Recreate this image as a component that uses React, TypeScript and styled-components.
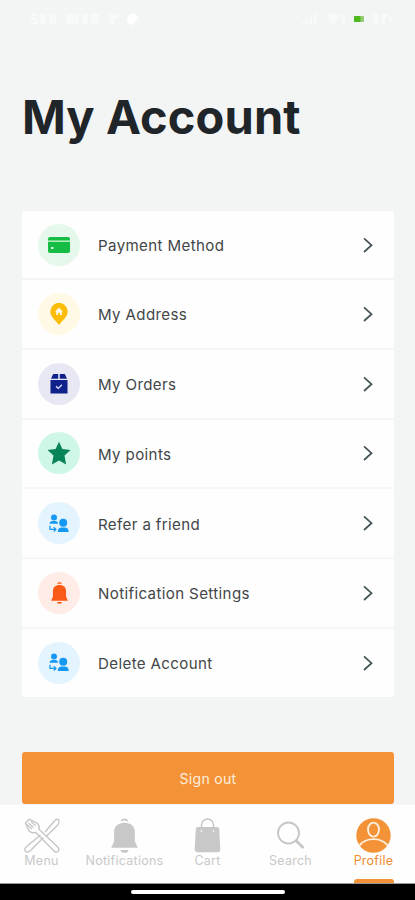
import React from "react";
import styled, { createGlobalStyle } from "styled-components";

const GlobalStyle = createGlobalStyle`
  * { box-sizing: border-box; }
  body { margin: 0; background: #f3f5f5; font-family: Inter, "Liberation Sans", sans-serif; }
`;

const Screen = styled.div`
  width: 415px;
  height: 900px;
  display: flex;
  flex-direction: column;
  background: #f3f5f5;
  overflow: hidden;
`;

const StatusBar = styled.header`
  height: 40px;
  flex: none;
  display: flex;
  align-items: center;
  justify-content: space-between;
  padding: 0 22px 2px 30px;
`;

const StatusGroup = styled.div`
  display: flex;
  align-items: center;
  gap: 6px;
`;

const Content = styled.main`
  flex: 1;
  min-height: 0;
  display: flex;
  flex-direction: column;
  padding: 0 21px 0 22px;
`;

const Title = styled.h1`
  margin: 48px 0 0;
  height: 58px;
  line-height: 58px;
  font-size: 47px;
  font-weight: 700;
  letter-spacing: 0.1px;
  color: #1f2528;
  white-space: nowrap;
`;

const Card = styled.ul`
  list-style: none;
  margin: 65px 0 0;
  padding: 0;
  background: #fefefe;
  border-radius: 2px;
`;

const Row = styled.li`
  height: 69.75px;
  display: flex;
  align-items: center;
  padding: 0 20px 0 16px;
  border-bottom: 2px solid #f5f7f7;

  &:first-child { height: 69px; }
  &:last-child { height: 68.25px; border-bottom: 0; }
`;

const Badge = styled.span<{ $tint: string }>`
  width: 42px;
  height: 42px;
  border-radius: 50%;
  background: ${(p) => p.$tint};
  display: grid;
  place-items: center;
`;

const Label = styled.span`
  flex: 1;
  margin-left: 18px;
  padding-top: 3px;
  font-size: 15.1px;
  line-height: 20px;
  letter-spacing: 0.37px;
  color: #434648;
`;

const SignOut = styled.button`
  margin-top: 55px;
  height: 52px;
  flex: none;
  border: 0;
  border-radius: 3px;
  background: #f39237;
  color: #fff0dc;
  font: 400 14px/20px Inter, "Liberation Sans", sans-serif;
  letter-spacing: 0.3px;
  padding: 2px 0 0;
`;

const TabBar = styled.nav`
  height: 79px;
  flex: none;
  display: grid;
  grid-template-columns: repeat(5, 83px);
  background: #fefefe;
  border-bottom: 1px solid #999;
`;

const Tab = styled.div<{ $active?: boolean }>`
  display: flex;
  flex-direction: column;
  align-items: center;
  padding-top: 13px;
  color: ${(p) => (p.$active ? "#f08c31" : "#c9c9c9")};
`;

const TabLabel = styled.span`
  font-size: 12.5px;
  line-height: 14px;
  margin-top: 1px;
  letter-spacing: 0.25px;
  white-space: nowrap;
`;

const ActiveMark = styled.span`
  width: 40px;
  height: 4px;
  margin-top: auto;
  border-radius: 3px 3px 0 0;
  background: #f39237;
`;

const HomeArea = styled.footer`
  height: 16px;
  flex: none;
  background: #000;
  display: flex;
  justify-content: center;
  padding-top: 6px;
`;

const HomeIndicator = styled.span`
  width: 154px;
  height: 4px;
  border-radius: 2px;
  background: #fff;
`;

const CardIcon = () => (
  <svg width="22" height="16" viewBox="0 0 22 16">
    <rect width="22" height="16" rx="2" fill="#16bd45" />
    <path d="M0 4.2h22" stroke="#baf0c6" strokeWidth="1.5" />
    <rect x="3" y="10" width="2.5" height="2" fill="#d6f6dd" />
  </svg>
);

const PinIcon = () => (
  <svg width="18" height="22" viewBox="0 0 18 22">
    <path d="M9 22C6 18 .3 13.8.3 8.6a8.7 8.7 0 0 1 17.4 0C17.7 13.8 12 18 9 22Z" fill="#fbbd08" />
    <path d="m9 4.8 4 3.8h-1.2v3.3H10V9.7H8v2.2H6.2V8.6H5Z" fill="#fffbea" />
  </svg>
);

const BoxIcon = () => (
  <svg width="18" height="20" viewBox="0 0 18 20" fill="#10218c">
    <path d="M3.2 0h5v4.8H1Zm6.6 0h5L17 4.8H9.8ZM.5 6h17v13.6H.5Z" />
    <path d="m6 12.4 2.3 2 3.6-3.6" fill="none" stroke="#d7dcf5" strokeWidth="1.4" />
  </svg>
);

const StarIcon = () => (
  <svg width="24" height="24" viewBox="0 0 24 24">
    <path d="m12 .8 3.4 7.3 8.1.9-6 5.5 1.6 8.9-7.1-4-7.1 4 1.6-8.9-6-5.5 8.1-.9Z" fill="#078458" />
  </svg>
);

const PeopleIcon = () => (
  <svg width="20" height="19" viewBox="0 0 20 19" fill="#1498f4">
    <circle cx="5" cy="3.4" r="3" />
    <path d="M.5 9.7c.2-2 1.6-2.8 3-2.8h3c1.3 0 2.3.8 2.6 2.8Z" />
    <circle cx="14.2" cy="8.8" r="4" />
    <path d="M8.7 18c.2-3.3 1.8-4.4 3.7-4.4h3.6c2 0 3.4 1.2 3.7 4.4Z" />
    <path d="M1 11.7v3.7h5.5M4.7 13.2l2.2 2.2-2.2 2" fill="none" stroke="#1498f4" strokeWidth="1.3" />
  </svg>
);

const BellShape = ({ width, height, color }: { width: number; height: number; color: string }) => (
  <svg width={width} height={height} viewBox="0 0 26 34" fill={color} preserveAspectRatio="none">
    <path d="M9.5 3.3C9.8 1.2 11 .4 13 .4s3.2.8 3.5 2.9l-1.8-.4c-.8-.8-2.6-.8-3.4 0ZM3 22.5v-9C3 8 7 4.5 13 4.5S23 8 23 13.5v9l2.8 6.5H.2ZM9 31h8c-.5 1.8-2 2.8-4 2.8S9.5 32.8 9 31Z" />
  </svg>
);

const Chevron = () => (
  <svg width="12" height="18" viewBox="0 0 12 18" fill="none">
    <path d="m2 2.3 7.5 6.9L2 16" stroke="#465559" strokeWidth="1.8" />
  </svg>
);

const CutleryIcon = () => (
  <svg width="36" height="35" viewBox="0 0 36 35" fill="none" stroke="#c6c6c6" strokeWidth="1.4" strokeLinejoin="round">
    <path d="M21 14 30.5 3c1.2-1.4 3-2 4-1.4.8 1.6.2 4.5-1.2 5.9L22 18.4M16.5 17 2 29c-1.6 1.6-1.4 3.4-.3 4.4s3.2.8 4.3-.5l13.5-13.4" />
    <path d="M5.3 1.2 1.4 5l3.8 8c1.8 1.8 4.2 2 6.6 1.4L30 33c1.2 1.3 3 1.5 4.2.3s.9-3-.5-4.2L15 11.3c.5-2.2 0-4.2-1.6-5.9Z" />
    <path d="m4.5 5 5 4.5M6.8 3.5l5 4.2M2.8 6.5 8 11" strokeWidth="1.2" />
  </svg>
);

const BagIcon = () => (
  <svg width="27" height="35" viewBox="0 0 27 35">
    <path d="M7.5 12V7a6 6 0 0 1 12 0v5" fill="none" stroke="#c6c6c6" strokeWidth="1.5" />
    <path d="M4.2 9h18.6c1.5 0 2.3.8 2.4 2.2L26.3 31c.1 2-1 3.3-3 3.3H3.7c-2 0-3.1-1.3-3-3.3l1.1-19.8C1.9 9.8 2.7 9 4.2 9Z" fill="#c8c8c8" />
    <circle cx="7.5" cy="13" r="1" fill="#f4f4f4" />
    <circle cx="19.5" cy="13" r="1" fill="#f4f4f4" />
  </svg>
);

const SearchIcon = () => (
  <svg width="30" height="35" viewBox="0 0 30 35" fill="none" stroke="#c6c6c6">
    <circle cx="12.5" cy="15" r="10.5" strokeWidth="1.9" />
    <path d="m20 22.5 7.5 7.5" strokeWidth="2.7" />
  </svg>
);

const ProfileIcon = () => (
  <svg width="35" height="35" viewBox="0 0 35 35">
    <circle cx="17.5" cy="17.5" r="17.2" fill="#f39237" />
    <g fill="none" stroke="#fff0dd" strokeWidth="1.9">
      <ellipse cx="17.5" cy="11.6" rx="5.5" ry="7" />
      <path d="M3.5 27.3c3.2-4 8-6.2 14-6.2s10.8 2.2 14 6.2" />
    </g>
  </svg>
);

const SignalMarks = () => (
  <svg width="120" height="16" viewBox="0 0 120 16" fill="#f8f9f9">
    <path d="M1 3h6v2H3v2h4v6H1v-2h4V9H1Zm9 0h6v10h-6Zm9 0h7v10h-7ZM36 3h13v10H36Zm16 0h6v10h-6Zm9 0h9l-3 10h-6Zm18 0h10v4h-5v6h-5Z" />
    <path d="M99 13a6 6 0 1 1 9.5-7l-6 8Z" fill="#fff" />
  </svg>
);

const NetworkMarks = () => (
  <svg width="45" height="14" viewBox="0 0 45 14" fill="#f8f9f9">
    <path d="M0 10h2v3H0Zm4-3h2v6H4Zm4-3h2v9H8Zm4-3h2v12h-2ZM24 4q7-5 14 0l-7 9Zm16-1h3v10h-3Z" />
  </svg>
);

const Battery = () => (
  <svg width="12" height="8" viewBox="0 0 12 8">
    <rect x="1" y="1" width="10" height="6" rx="1" fill="#91cd70" />
    <rect x="1" y="1" width="6.5" height="6" rx="1" fill="#4db91d" />
  </svg>
);

const BatteryLevel = () => (
  <svg width="22" height="12" viewBox="0 0 22 12" fill="#f8f9f9">
    <path d="M2 1h5v10H2Zm9 0h6v3h-3v7h-3Zm7 3h3v4h-3Z" />
  </svg>
);

const items = [
  { label: "Payment Method", tint: "#e6f7eb", icon: <CardIcon /> },
  { label: "My Address", tint: "#fff9e5", icon: <PinIcon /> },
  { label: "My Orders", tint: "#e7e8f3", icon: <BoxIcon /> },
  { label: "My points", tint: "#cff7e7", icon: <StarIcon /> },
  { label: "Refer a friend", tint: "#e4f4fe", icon: <PeopleIcon /> },
  { label: "Notification Settings", tint: "#ffece7", icon: <BellShape width={17} height={22} color="#fa5a16" /> },
  { label: "Delete Account", tint: "#e4f4fe", icon: <PeopleIcon /> },
];

const tabs = [
  { label: "Menu", icon: <CutleryIcon /> },
  { label: "Notifications", icon: <BellShape width={27} height={35} color="#c8c8c8" /> },
  { label: "Cart", icon: <BagIcon /> },
  { label: "Search", icon: <SearchIcon /> },
  { label: "Profile", icon: <ProfileIcon />, active: true },
];

export default function App() {
  return (
    <Screen>
      <GlobalStyle />
      <StatusBar>
        <StatusGroup><SignalMarks /></StatusGroup>
        <StatusGroup><NetworkMarks /><Battery /><BatteryLevel /></StatusGroup>
      </StatusBar>
      <Content>
        <Title>My Account</Title>
        <Card>
          {items.map((item) => (
            <Row key={item.label}>
              <Badge $tint={item.tint}>{item.icon}</Badge>
              <Label>{item.label}</Label>
              <Chevron />
            </Row>
          ))}
        </Card>
        <SignOut>Sign out</SignOut>
      </Content>
      <TabBar>
        {tabs.map((tab) => (
          <Tab key={tab.label} $active={tab.active}>
            {tab.icon}
            <TabLabel>{tab.label}</TabLabel>
            {tab.active && <ActiveMark />}
          </Tab>
        ))}
      </TabBar>
      <HomeArea><HomeIndicator /></HomeArea>
    </Screen>
  );
}
